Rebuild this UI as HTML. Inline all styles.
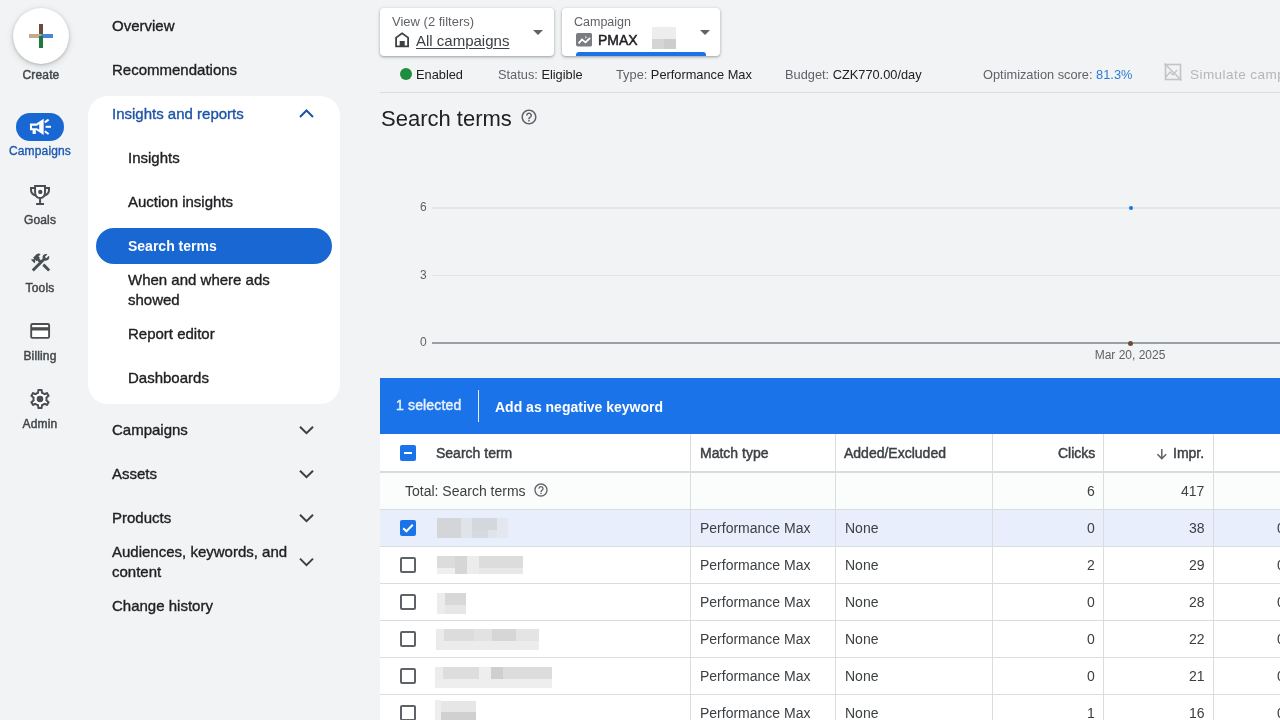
<!DOCTYPE html>
<html><head><meta charset="utf-8"><style>
html,body{margin:0;padding:0;width:1280px;height:720px;overflow:hidden;background:#f1f3f4;font-family:"Liberation Sans",sans-serif;}
.t{position:absolute;white-space:nowrap;will-change:transform;}
.r{position:absolute;}
.gs{-webkit-text-stroke:0.35px currentColor;}
.md{-webkit-text-stroke:0.45px currentColor;}
</style></head><body>
<div class="r" style="left:13px;top:8px;width:56px;height:56px;background:#fff;border-radius:50%;box-shadow:0 1px 3px rgba(60,64,67,.28),0 2px 6px 1px rgba(60,64,67,.12);"></div>
<div class="r" style="left:39px;top:24px;width:4px;height:12px;background:#6b4b3a;"></div>
<div class="r" style="left:29px;top:34px;width:12px;height:4px;background:#c4a98a;"></div>
<div class="r" style="left:41px;top:34px;width:12px;height:4px;background:#4a86d8;"></div>
<div class="r" style="left:39px;top:36px;width:4px;height:12px;background:#1e7a3c;"></div>
<div class="t" style="left:1.0px;width:80px;text-align:center;top:66.84px;font-size:12px;line-height:17px;font-weight:400;color:#43474b;letter-spacing:0.15px;-webkit-text-stroke:0.45px currentColor;">Create</div>
<div class="r" style="left:16px;top:113px;width:48px;height:28px;background:#1967d2;border-radius:14px;"></div>
<svg class="r" style="left:24px;top:112px" width="34" height="30" viewBox="24 112 34 30"><path d="M31,124.6 H36.6 L42.6,120.6 V133 L36.6,129.2 H31 Z" fill="none" stroke="#fff" stroke-width="2.1" stroke-linejoin="miter"/><path d="M39.2,123.4 L42,121.5 V132 L39.2,130.2 Z" fill="#fff"/><rect x="32.6" y="129" width="3.2" height="5" fill="#fff"/><line x1="44.8" y1="122.4" x2="48.6" y2="119.6" stroke="#fff" stroke-width="2"/><line x1="45.6" y1="126.8" x2="51" y2="126.8" stroke="#fff" stroke-width="2"/><line x1="44.8" y1="131.2" x2="48.6" y2="134" stroke="#fff" stroke-width="2"/></svg>
<div class="t" style="left:0.0px;width:80px;text-align:center;top:143.44px;font-size:12px;line-height:17px;font-weight:400;color:#1b58b0;letter-spacing:0.15px;-webkit-text-stroke:0.35px currentColor;">Campaigns</div>
<svg class="r" style="left:26px;top:182px" width="28" height="26" viewBox="0 0 28 26"><path d="M9.1,4.1 H19 V10 Q19,16 14.05,16 Q9.1,16 9.1,10 Z" fill="#fff" stroke="#4a4e52" stroke-width="2"/><path d="M9.1,6 H5 V8 Q5,12 9.6,13.6 M19,6 H23 V8 Q23,12 18.5,13.6" fill="none" stroke="#4a4e52" stroke-width="2"/><line x1="14.05" y1="16" x2="14.05" y2="22" stroke="#4a4e52" stroke-width="2"/><line x1="10.1" y1="22" x2="18" y2="22" stroke="#4a4e52" stroke-width="2"/><circle cx="14.3" cy="9.9" r="2.2" fill="#4a4e52"/></svg>
<div class="t" style="left:0.0px;width:80px;text-align:center;top:211.84px;font-size:12px;line-height:17px;font-weight:400;color:#43474b;letter-spacing:0.15px;-webkit-text-stroke:0.45px currentColor;">Goals</div>
<svg class="r" style="left:28.7px;top:250.7px" width="23.2" height="23.2" viewBox="0 0 24 24"><path fill="#4a4e52" d="M13.783 15.172l2.121-2.121 5.996 5.996-2.121 2.121zM17.5 10c1.93 0 3.5-1.570 3.5-3.5 0-.58-.16-1.12-.41-1.6l-2.7 2.7-1.49-1.49 2.7-2.7c-.48-.25-1.020-.41-1.6-.41C15.57 3 14 4.57 14 6.5c0 .41.08.8.21 1.16l-1.85 1.85-1.78-1.78.71-.71-1.41-1.41L12 3.49c-1.17-1.17-3.07-1.17-4.24 0L4.22 7.03l1.41 1.41H2.81l-.71.71 3.54 3.54.71-.71V9.15l1.41 1.41.71-.71 1.78 1.78-7.41 7.41 2.12 2.12L16.34 9.79c.36.13.75.21 1.16.21z"/></svg>
<div class="t" style="left:0.0px;width:80px;text-align:center;top:279.94px;font-size:12px;line-height:17px;font-weight:400;color:#43474b;letter-spacing:0.15px;-webkit-text-stroke:0.45px currentColor;">Tools</div>
<svg class="r" style="left:26px;top:318px" width="28" height="26" viewBox="26 318 28 26"><rect x="31.2" y="324" width="17.9" height="13.9" rx="1.2" fill="#fff" stroke="#4a4e52" stroke-width="1.9"/><rect x="31" y="327.2" width="18" height="3.3" fill="#4a4e52"/></svg>
<div class="t" style="left:0.0px;width:80px;text-align:center;top:348.14px;font-size:12px;line-height:17px;font-weight:400;color:#43474b;letter-spacing:0.15px;-webkit-text-stroke:0.45px currentColor;">Billing</div>
<svg class="r" style="left:28.3px;top:386.9px" width="24" height="24" viewBox="0 0 24 24"><path fill="#fff" transform="translate(12 12) scale(0.85) translate(-12 -12)" d="M19.14 12.94c.04-.3.06-.61.06-.94 0-.32-.02-.64-.07-.94l2.03-1.58c.18-.14.23-.41.12-.61l-1.92-3.32c-.12-.22-.37-.29-.59-.22l-2.39.96c-.5-.38-1.03-.7-1.62-.94l-.36-2.54c-.04-.24-.24-.41-.48-.41h-3.84c-.24 0-.43.17-.47.41l-.36 2.54c-.59.24-1.13.57-1.62.94l-2.39-.96c-.22-.08-.47 0-.59.22L2.74 8.87c-.12.21-.08.47.12.61l2.03 1.58c-.05.3-.09.63-.09.94s.02.64.07.94l-2.03 1.58c-.18.14-.23.41-.12.61l1.920 3.32c.12.22.37.29.59.22l2.39-.96c.5.38 1.03.7 1.62.94l.36 2.54c.05.24.24.41.48.41h3.84c.24 0 .44-.17.47-.41l.36-2.54c.59-.24 1.13-.56 1.62-.94l2.39.96c.22.08.47 0 .59-.22l1.92-3.32c.12-.22.07-.47-.12-.61l-2.01-1.58z"/><path fill="#4a4e52" fill-rule="evenodd" d="M19.43 12.98c.04-.32.07-.64.07-.98 0-.34-.03-.66-.07-.98l2.11-1.65c.19-.15.24-.42.12-.64l-2-3.46c-.09-.16-.26-.25-.44-.25-.06 0-.12.01-.17.03l-2.49 1c-.52-.4-1.08-.73-1.69-.98l-.38-2.65C14.46 2.18 14.25 2 14 2h-4c-.25 0-.46.18-.49.42l-.38 2.65c-.61.25-1.17.59-1.69.98l-2.49-1c-.06-.02-.12-.03-.18-.03-.17 0-.34.09-.43.25l-2 3.46c-.13.22-.07.49.12.64l2.11 1.65c-.04.32-.07.65-.07.98 0 .33.03.66.07.98l-2.11 1.65c-.19.15-.24.42-.12.64l2 3.46c.09.16.26.25.44.25.06 0 .12-.01.17-.03l2.49-1c.52.4 1.08.73 1.69.98l.38 2.65c.03.24.24.42.49.42h4c.25 0 .46-.18.49-.42l.38-2.65c.61-.25 1.17-.59 1.69-.98l2.49 1c.06.02.12.03.18.03.17 0 .34-.09.43-.25l2-3.46c.12-.22.07-.49-.12-.64l-2.11-1.65zm-1.98-1.71c.04.31.05.52.05.73 0 .21-.02.43-.05.73l-.14 1.13.89.7 1.08.84-.7 1.21-1.27-.51-1.04-.42-.9.68c-.43.32-.84.56-1.25.73l-1.06.43-.16 1.13-.2 1.35h-1.4l-.19-1.35-.16-1.13-1.06-.43c-.43-.18-.83-.41-1.23-.71l-.91-.7-1.06.43-1.27.51-.7-1.21 1.08-.84.89-.7-.14-1.13c-.03-.31-.05-.54-.05-.74s.02-.43.05-.73l.14-1.13-.89-.7-1.08-.84.7-1.21 1.27.51 1.04.42.9-.68c.43-.32.84-.56 1.25-.73l1.06-.43.16-1.13.2-1.35h1.39l.19 1.35.16 1.13 1.06.43c.43.18.83.41 1.23.71l.91.7 1.06-.43 1.27-.51.7 1.21-1.07.85-.89.7.14 1.13z"/><circle cx="12" cy="12" r="3.3" fill="#4a4e52"/></svg>
<div class="t" style="left:0.0px;width:80px;text-align:center;top:415.94px;font-size:12px;line-height:17px;font-weight:400;color:#43474b;letter-spacing:0.15px;-webkit-text-stroke:0.45px currentColor;">Admin</div>
<div class="t gs" style="left:112px;top:14.90px;font-size:15px;line-height:21px;font-weight:400;color:#202124;">Overview</div>
<div class="t gs" style="left:112px;top:59.30px;font-size:15px;line-height:21px;font-weight:400;color:#202124;">Recommendations</div>
<div class="r" style="left:88px;top:96px;width:252px;height:308px;background:#fff;border-radius:20px;"></div>
<div class="t gs" style="left:112px;top:103.40px;font-size:15px;line-height:21px;font-weight:400;color:#1d54a6;">Insights and reports</div>
<div class="t gs" style="left:128px;top:147.10px;font-size:15px;line-height:21px;font-weight:400;color:#202124;">Insights</div>
<div class="t gs" style="left:128px;top:191.20px;font-size:15px;line-height:21px;font-weight:400;color:#202124;">Auction insights</div>
<div class="r" style="left:96px;top:228px;width:236px;height:36px;background:#1967d2;border-radius:18px;"></div>
<div class="t " style="left:128px;top:236.25px;font-size:14px;line-height:20px;font-weight:700;color:#fff;">Search terms</div>
<div class="t gs" style="left:128px;top:269.30px;font-size:15px;line-height:21px;font-weight:400;color:#202124;">When and where ads</div>
<div class="t gs" style="left:128px;top:289.00px;font-size:15px;line-height:21px;font-weight:400;color:#202124;">showed</div>
<div class="t gs" style="left:128px;top:323.40px;font-size:15px;line-height:21px;font-weight:400;color:#202124;">Report editor</div>
<div class="t gs" style="left:128px;top:367.10px;font-size:15px;line-height:21px;font-weight:400;color:#202124;">Dashboards</div>
<div class="t gs" style="left:112px;top:419.40px;font-size:15px;line-height:21px;font-weight:400;color:#202124;">Campaigns</div>
<div class="t gs" style="left:112px;top:463.40px;font-size:15px;line-height:21px;font-weight:400;color:#202124;">Assets</div>
<div class="t gs" style="left:112px;top:507.10px;font-size:15px;line-height:21px;font-weight:400;color:#202124;">Products</div>
<div class="t gs" style="left:112px;top:541.30px;font-size:15px;line-height:21px;font-weight:400;color:#202124;">Audiences, keywords, and</div>
<div class="t gs" style="left:112px;top:560.90px;font-size:15px;line-height:21px;font-weight:400;color:#202124;">content</div>
<div class="t gs" style="left:112px;top:595.10px;font-size:15px;line-height:21px;font-weight:400;color:#202124;">Change history</div>
<svg class="r" style="left:0;top:0" width="340" height="720"><polyline points="300,117.0 306.5,110.5 313,117.0" fill="none" stroke="#1d54a6" stroke-width="2"/></svg>
<svg class="r" style="left:0;top:0" width="340" height="720"><polyline points="300,426.7 306.5,433.2 313,426.7" fill="none" stroke="#3c4043" stroke-width="2"/></svg>
<svg class="r" style="left:0;top:0" width="340" height="720"><polyline points="300,470.7 306.5,477.2 313,470.7" fill="none" stroke="#3c4043" stroke-width="2"/></svg>
<svg class="r" style="left:0;top:0" width="340" height="720"><polyline points="300,514.7 306.5,521.2 313,514.7" fill="none" stroke="#3c4043" stroke-width="2"/></svg>
<svg class="r" style="left:0;top:0" width="340" height="720"><polyline points="300,558.6 306.5,565.1 313,558.6" fill="none" stroke="#3c4043" stroke-width="2"/></svg>
<div class="r" style="left:380px;top:8px;width:174px;height:48px;background:#fff;border-radius:4px;box-shadow:0 1px 2px rgba(60,64,67,.3),0 1px 3px 1px rgba(60,64,67,.15);"></div>
<div class="t " style="left:392.3px;top:13.20px;font-size:13px;line-height:18px;font-weight:400;color:#5f6368;">View (2 filters)</div>
<svg class="r" style="left:390px;top:28px" width="24" height="24" viewBox="0 0 24 24"><path d="M6.1,18.3 V9.6 L12.1,5.3 L18.1,9.6 V18.3 Z" fill="none" stroke="#3c4043" stroke-width="1.8" stroke-linejoin="miter"/><rect x="9.7" y="13" width="5" height="5.3" fill="#3c4043"/></svg>
<div class="t " style="left:416.4px;top:29.60px;font-size:15px;line-height:21px;font-weight:400;color:#3c4043;text-decoration:underline;text-underline-offset:2px;">All campaigns</div>
<svg class="r" style="left:533px;top:30px" width="10" height="5" viewBox="0 0 10 5"><path d="M0 0h10L5 5z" fill="#5f6368"/></svg>
<div class="r" style="left:562px;top:8px;width:158px;height:48px;background:#fff;border-radius:4px;box-shadow:0 1px 2px rgba(60,64,67,.3),0 1px 3px 1px rgba(60,64,67,.15);overflow:hidden;"></div>
<div class="t " style="left:573.9px;top:13.17px;font-size:12.5px;line-height:18px;font-weight:400;color:#5f6368;">Campaign</div>
<svg class="r" style="left:576px;top:33px" width="16.2" height="13.5" viewBox="0 0 16.2 13.5"><rect width="16.2" height="13.5" rx="2" fill="#7a7c7f"/><polyline points="2.6,10.4 6,6.6 9.5,9.4 14,5" fill="none" stroke="#fff" stroke-width="1.8"/><path d="M9.6,2.6 L10.8,4.6 L9.4,5.8 Z" fill="#fff"/></svg>
<div class="t md" style="left:598.4px;top:30.15px;font-size:14px;line-height:20px;font-weight:400;color:#202124;">PMAX</div>
<div class="r" style="left:652px;top:27px;width:24px;height:12px;background:#ededed;"></div>
<div class="r" style="left:652px;top:39px;width:12px;height:10px;background:#d5d5d5;"></div>
<div class="r" style="left:664px;top:39px;width:12px;height:10px;background:#cdcdcd;"></div>
<svg class="r" style="left:700px;top:30px" width="10" height="5" viewBox="0 0 10 5"><path d="M0 0h10L5 5z" fill="#5f6368"/></svg>
<div class="r" style="left:576px;top:52px;width:130px;height:4px;background:#1a73e8;border-radius:3px 3px 0 0;"></div>
<div class="r" style="left:400px;top:68px;width:12px;height:12px;background:#1e8e3e;border-radius:50%;"></div>
<div class="t " style="left:416.4px;top:66.06px;font-size:12.8px;line-height:18px;font-weight:400;color:#202124;">Enabled</div>
<div class="t " style="left:497.8px;top:66.06px;font-size:12.8px;line-height:18px;font-weight:400;color:#202124;"><span style="color:#5f6368">Status: </span>Eligible</div>
<div class="t " style="left:616.4px;top:66.06px;font-size:12.8px;line-height:18px;font-weight:400;color:#202124;"><span style="color:#5f6368">Type: </span>Performance Max</div>
<div class="t " style="left:784.7px;top:66.06px;font-size:12.8px;line-height:18px;font-weight:400;color:#202124;"><span style="color:#5f6368">Budget: </span>CZK770.00/day</div>
<div class="t " style="left:982.6px;top:66.06px;font-size:12.8px;line-height:18px;font-weight:400;color:#202124;"><span style="color:#5f6368">Optimization score: </span><span style="color:#2b7bd6">81.3%</span></div>
<svg class="r" style="left:1163px;top:62px" width="20" height="20" viewBox="0 0 20 20"><rect x="2.5" y="2.5" width="15" height="15" fill="none" stroke="#c2c4c6" stroke-width="1.6"/><line x1="1.5" y1="1.5" x2="18.5" y2="18.5" stroke="#c2c4c6" stroke-width="1.6"/><polyline points="3,15 7,10 10,13 14,8" fill="none" stroke="#c2c4c6" stroke-width="1.4"/></svg>
<div class="t " style="left:1189.5px;top:65.02px;font-size:13.5px;line-height:19px;font-weight:400;color:#b4b6b9;letter-spacing:0.45px;">Simulate campaign</div>
<div class="r" style="left:380px;top:92px;width:900px;height:1px;background:#dadce0;"></div>
<div class="t " style="left:380.6px;top:103.18px;font-size:22px;line-height:31px;font-weight:400;color:#202124;">Search terms</div>
<svg class="r" style="left:519.6px;top:108.2px" width="18" height="18" viewBox="0 0 24 24"><path fill="#5f6368" d="M11 18h2v-2h-2v2zm1-16C6.48 2 2 6.48 2 12s4.48 10 10 10 10-4.48 10-10S17.52 2 12 2zm0 18c-4.41 0-8-3.590-8-8s3.59-8 8-8 8 3.59 8 8-3.59 8-8 8zm0-14c-2.21 0-4 1.79-4 4h2c0-1.1.9-2 2-2s2 .9 2 2c0 2-3 1.75-3 5h2c0-2.25 3-2.5 3-5 0-2.21-1.79-4-4-4z"/></svg>
<div class="t" style="right:853px;top:199.34px;font-size:12px;line-height:17px;font-weight:400;color:#5f6368;">6</div>
<div class="t" style="right:853.5px;top:267.14px;font-size:12px;line-height:17px;font-weight:400;color:#5f6368;">3</div>
<div class="t" style="right:853.3px;top:334.04px;font-size:12px;line-height:17px;font-weight:400;color:#5f6368;">0</div>
<div class="r" style="left:432px;top:207px;width:848px;height:2px;background:#e5e6e8;"></div>
<div class="r" style="left:432px;top:275px;width:848px;height:1px;background:#e2e4e7;"></div>
<div class="r" style="left:432px;top:342px;width:848px;height:2px;background:#9aa0a6;"></div>
<div class="r" style="left:1128.5px;top:206px;width:4px;height:4px;background:#1a73e8;border-radius:50%;"></div>
<div class="r" style="left:1128.1px;top:340.5px;width:5px;height:5px;background:#6b4b3a;border-radius:50%;"></div>
<div class="t" style="left:1070.2px;width:120px;text-align:center;top:347.34px;font-size:12px;line-height:17px;font-weight:400;color:#5f6368;">Mar 20, 2025</div>
<div class="r" style="left:380px;top:378px;width:900px;height:56px;background:#1a73e8;"></div>
<div class="t md" style="left:396.4px;top:395.35px;font-size:14px;line-height:20px;font-weight:400;color:#e8f0fe;letter-spacing:0.15px;">1 selected</div>
<div class="r" style="left:478px;top:390px;width:1px;height:32px;background:#e8f0fe;"></div>
<div class="t " style="left:495.1px;top:396.65px;font-size:14px;line-height:20px;font-weight:700;color:#fff;">Add as negative keyword</div>
<div class="r" style="left:380px;top:434px;width:900px;height:37px;background:#fff;"></div>
<div class="r" style="left:380px;top:471px;width:900px;height:2px;background:#d9dbde;"></div>
<div class="r" style="left:400px;top:445px;width:16px;height:16px;background:#1a73e8;border-radius:2px;"></div>
<div class="r" style="left:404px;top:452px;width:8px;height:2px;background:#fff;"></div>
<div class="t md" style="left:436.1px;top:443.05px;font-size:14px;line-height:20px;font-weight:400;color:#3c4043;">Search term</div>
<div class="t md" style="left:699.5px;top:443.35px;font-size:14px;line-height:20px;font-weight:400;color:#3c4043;">Match type</div>
<div class="t md" style="left:844.2px;top:443.35px;font-size:14px;line-height:20px;font-weight:400;color:#3c4043;">Added/Excluded</div>
<div class="t" style="right:185px;top:443.35px;font-size:14px;line-height:20px;font-weight:400;color:#3c4043;-webkit-text-stroke:0.45px currentColor;">Clicks</div>
<div class="t" style="right:75.5px;top:443.35px;font-size:14px;line-height:20px;font-weight:400;color:#3c4043;-webkit-text-stroke:0.45px currentColor;">Impr.</div>
<svg class="r" style="left:1155px;top:447px" width="13" height="13" viewBox="0 0 13 13"><line x1="6.8" y1="2" x2="6.8" y2="11.5" stroke="#5f6368" stroke-width="1.5"/><polyline points="2.4,7.2 6.8,11.6 11.2,7.2" fill="none" stroke="#5f6368" stroke-width="1.5"/></svg>
<div class="r" style="left:380px;top:473px;width:900px;height:36px;background:#fbfcfc;"></div>
<div class="r" style="left:380px;top:509px;width:900px;height:1px;background:#dadce0;"></div>
<div class="t " style="left:405px;top:480.85px;font-size:14px;line-height:20px;font-weight:400;color:#3c4043;">Total: Search terms</div>
<svg class="r" style="left:533px;top:482px" width="16" height="16" viewBox="0 0 24 24"><path fill="#5f6368" d="M11 18h2v-2h-2v2zm1-16C6.48 2 2 6.48 2 12s4.48 10 10 10 10-4.48 10-10S17.52 2 12 2zm0 18c-4.41 0-8-3.590-8-8s3.59-8 8-8 8 3.59 8 8-3.59 8-8 8zm0-14c-2.21 0-4 1.79-4 4h2c0-1.1.9-2 2-2s2 .9 2 2c0 2-3 1.75-3 5h2c0-2.25 3-2.5 3-5 0-2.21-1.79-4-4-4z"/></svg>
<div class="t" style="right:185px;top:480.85px;font-size:14px;line-height:20px;font-weight:400;color:#3c4043;">6</div>
<div class="t" style="right:75.5px;top:480.85px;font-size:14px;line-height:20px;font-weight:400;color:#3c4043;">417</div>
<div class="t " style="left:1279px;top:480.85px;font-size:14px;line-height:20px;font-weight:400;color:#3c4043;">1</div>
<div class="r" style="left:380px;top:510px;width:900px;height:36px;background:#e8eefc;"></div>
<div class="r" style="left:380px;top:546px;width:900px;height:1px;background:#dadce0;"></div>
<svg class="r" style="left:400px;top:520px" width="16" height="16" viewBox="0 0 16 16"><rect width="16" height="16" rx="2" fill="#1a73e8"/><polyline points="3.2,8.2 6.4,11.3 12.8,4.8" fill="none" stroke="#fff" stroke-width="2"/></svg>
<div class="r" style="left:437px;top:518px;width:24px;height:20px;background:#d3d5d9;"></div>
<div class="r" style="left:461px;top:518px;width:11px;height:20px;background:#e0e3ea;"></div>
<div class="r" style="left:472px;top:518px;width:25px;height:12px;background:#d3d7de;"></div>
<div class="r" style="left:472px;top:530px;width:16px;height:8px;background:#d5d9e0;"></div>
<div class="r" style="left:488px;top:530px;width:9px;height:8px;background:#e0e3ea;"></div>
<div class="r" style="left:497px;top:518px;width:11px;height:20px;background:#e4e7ee;"></div>
<div class="t " style="left:699.5px;top:517.75px;font-size:14px;line-height:20px;font-weight:400;color:#3c4043;">Performance Max</div>
<div class="t " style="left:844.5px;top:517.75px;font-size:14px;line-height:20px;font-weight:400;color:#3c4043;">None</div>
<div class="t" style="right:185px;top:517.75px;font-size:14px;line-height:20px;font-weight:400;color:#3c4043;">0</div>
<div class="t" style="right:75.5px;top:517.75px;font-size:14px;line-height:20px;font-weight:400;color:#3c4043;">38</div>
<div class="t " style="left:1277px;top:517.75px;font-size:14px;line-height:20px;font-weight:400;color:#3c4043;">0</div>
<div class="r" style="left:380px;top:547px;width:900px;height:36px;background:#fff;"></div>
<div class="r" style="left:380px;top:583px;width:900px;height:1px;background:#dadce0;"></div>
<div class="r" style="left:400px;top:557px;width:16px;height:16px;box-sizing:border-box;border:2px solid #5f6368;border-radius:2px;"></div>
<div class="r" style="left:437px;top:556px;width:18px;height:12px;background:#dcdcdc;"></div>
<div class="r" style="left:455px;top:556px;width:12px;height:18px;background:#d6d6d6;"></div>
<div class="r" style="left:467px;top:556px;width:12px;height:18px;background:#ececec;"></div>
<div class="r" style="left:479px;top:556px;width:44px;height:12px;background:#dcdcdc;"></div>
<div class="r" style="left:437px;top:568px;width:18px;height:6px;background:#efefef;"></div>
<div class="r" style="left:479px;top:568px;width:44px;height:6px;background:#e8e8e8;"></div>
<div class="t " style="left:699.5px;top:554.75px;font-size:14px;line-height:20px;font-weight:400;color:#3c4043;">Performance Max</div>
<div class="t " style="left:844.5px;top:554.75px;font-size:14px;line-height:20px;font-weight:400;color:#3c4043;">None</div>
<div class="t" style="right:185px;top:554.75px;font-size:14px;line-height:20px;font-weight:400;color:#3c4043;">2</div>
<div class="t" style="right:75.5px;top:554.75px;font-size:14px;line-height:20px;font-weight:400;color:#3c4043;">29</div>
<div class="t " style="left:1277px;top:554.75px;font-size:14px;line-height:20px;font-weight:400;color:#3c4043;">0</div>
<div class="r" style="left:380px;top:584px;width:900px;height:36px;background:#fff;"></div>
<div class="r" style="left:380px;top:620px;width:900px;height:1px;background:#dadce0;"></div>
<div class="r" style="left:400px;top:594px;width:16px;height:16px;box-sizing:border-box;border:2px solid #5f6368;border-radius:2px;"></div>
<div class="r" style="left:437px;top:593px;width:8px;height:21px;background:#ececec;"></div>
<div class="r" style="left:445px;top:593px;width:21px;height:12px;background:#d8d8d8;"></div>
<div class="r" style="left:445px;top:605px;width:21px;height:9px;background:#e6e6e6;"></div>
<div class="t " style="left:699.5px;top:591.75px;font-size:14px;line-height:20px;font-weight:400;color:#3c4043;">Performance Max</div>
<div class="t " style="left:844.5px;top:591.75px;font-size:14px;line-height:20px;font-weight:400;color:#3c4043;">None</div>
<div class="t" style="right:185px;top:591.75px;font-size:14px;line-height:20px;font-weight:400;color:#3c4043;">0</div>
<div class="t" style="right:75.5px;top:591.75px;font-size:14px;line-height:20px;font-weight:400;color:#3c4043;">28</div>
<div class="t " style="left:1277px;top:591.75px;font-size:14px;line-height:20px;font-weight:400;color:#3c4043;">0</div>
<div class="r" style="left:380px;top:621px;width:900px;height:36px;background:#fff;"></div>
<div class="r" style="left:380px;top:657px;width:900px;height:1px;background:#dadce0;"></div>
<div class="r" style="left:400px;top:631px;width:16px;height:16px;box-sizing:border-box;border:2px solid #5f6368;border-radius:2px;"></div>
<div class="r" style="left:436px;top:629px;width:8px;height:21px;background:#ebebeb;"></div>
<div class="r" style="left:444px;top:629px;width:30px;height:12px;background:#dcdcdc;"></div>
<div class="r" style="left:474px;top:629px;width:18px;height:12px;background:#e2e2e2;"></div>
<div class="r" style="left:492px;top:629px;width:24px;height:12px;background:#d6d6d6;"></div>
<div class="r" style="left:516px;top:629px;width:23px;height:12px;background:#e4e4e4;"></div>
<div class="r" style="left:444px;top:641px;width:95px;height:9px;background:#ececec;"></div>
<div class="t " style="left:699.5px;top:628.75px;font-size:14px;line-height:20px;font-weight:400;color:#3c4043;">Performance Max</div>
<div class="t " style="left:844.5px;top:628.75px;font-size:14px;line-height:20px;font-weight:400;color:#3c4043;">None</div>
<div class="t" style="right:185px;top:628.75px;font-size:14px;line-height:20px;font-weight:400;color:#3c4043;">0</div>
<div class="t" style="right:75.5px;top:628.75px;font-size:14px;line-height:20px;font-weight:400;color:#3c4043;">22</div>
<div class="t " style="left:1277px;top:628.75px;font-size:14px;line-height:20px;font-weight:400;color:#3c4043;">0</div>
<div class="r" style="left:380px;top:658px;width:900px;height:36px;background:#fff;"></div>
<div class="r" style="left:380px;top:694px;width:900px;height:1px;background:#dadce0;"></div>
<div class="r" style="left:400px;top:668px;width:16px;height:16px;box-sizing:border-box;border:2px solid #5f6368;border-radius:2px;"></div>
<div class="r" style="left:435px;top:667px;width:8px;height:21px;background:#ececec;"></div>
<div class="r" style="left:443px;top:667px;width:36px;height:12px;background:#dddddd;"></div>
<div class="r" style="left:479px;top:667px;width:12px;height:12px;background:#eeeeee;"></div>
<div class="r" style="left:491px;top:667px;width:12px;height:12px;background:#cfcfcf;"></div>
<div class="r" style="left:503px;top:667px;width:49px;height:12px;background:#dcdcdc;"></div>
<div class="r" style="left:435px;top:679px;width:117px;height:9px;background:#eeeeee;"></div>
<div class="t " style="left:699.5px;top:665.75px;font-size:14px;line-height:20px;font-weight:400;color:#3c4043;">Performance Max</div>
<div class="t " style="left:844.5px;top:665.75px;font-size:14px;line-height:20px;font-weight:400;color:#3c4043;">None</div>
<div class="t" style="right:185px;top:665.75px;font-size:14px;line-height:20px;font-weight:400;color:#3c4043;">0</div>
<div class="t" style="right:75.5px;top:665.75px;font-size:14px;line-height:20px;font-weight:400;color:#3c4043;">21</div>
<div class="t " style="left:1277px;top:665.75px;font-size:14px;line-height:20px;font-weight:400;color:#3c4043;">0</div>
<div class="r" style="left:380px;top:695px;width:900px;height:36px;background:#fff;"></div>
<div class="r" style="left:380px;top:731px;width:900px;height:1px;background:#dadce0;"></div>
<div class="r" style="left:400px;top:705px;width:16px;height:16px;box-sizing:border-box;border:2px solid #5f6368;border-radius:2px;"></div>
<div class="r" style="left:435px;top:700px;width:6px;height:20px;background:#eeeeee;"></div>
<div class="r" style="left:441px;top:701px;width:35px;height:11px;background:#e6e6e6;"></div>
<div class="r" style="left:441px;top:712px;width:35px;height:8px;background:#d0d0d0;"></div>
<div class="t " style="left:699.5px;top:702.75px;font-size:14px;line-height:20px;font-weight:400;color:#3c4043;">Performance Max</div>
<div class="t " style="left:844.5px;top:702.75px;font-size:14px;line-height:20px;font-weight:400;color:#3c4043;">None</div>
<div class="t" style="right:185px;top:702.75px;font-size:14px;line-height:20px;font-weight:400;color:#3c4043;">1</div>
<div class="t" style="right:75.5px;top:702.75px;font-size:14px;line-height:20px;font-weight:400;color:#3c4043;">16</div>
<div class="t " style="left:1277px;top:702.75px;font-size:14px;line-height:20px;font-weight:400;color:#3c4043;">0</div>
<div class="r" style="left:690px;top:434px;width:1px;height:286px;background:#dadce0;"></div>
<div class="r" style="left:835px;top:434px;width:1px;height:286px;background:#dadce0;"></div>
<div class="r" style="left:992px;top:434px;width:1px;height:286px;background:#dadce0;"></div>
<div class="r" style="left:1103px;top:434px;width:1px;height:286px;background:#dadce0;"></div>
<div class="r" style="left:1213px;top:434px;width:1px;height:286px;background:#dadce0;"></div>
</body></html>
